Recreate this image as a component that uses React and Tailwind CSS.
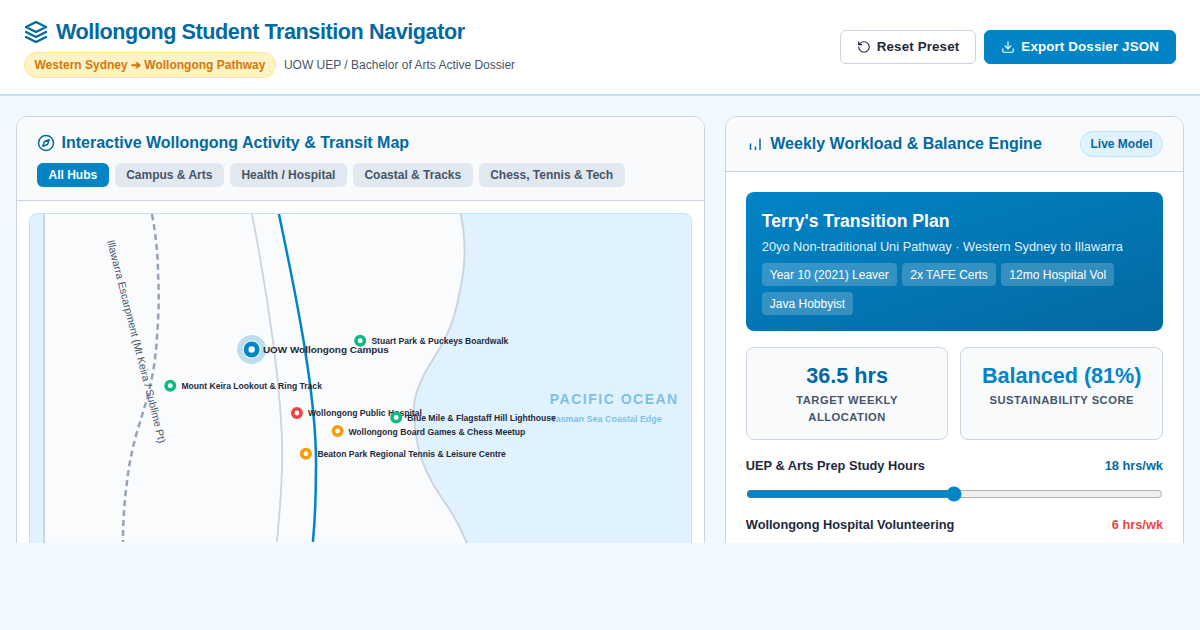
import React from "react";
import { RotateCcw, Download, Compass } from "lucide-react";

const filters = ["All Hubs", "Campus & Arts", "Health / Hospital", "Coastal & Tracks", "Chess, Tennis & Tech"];
const tags = ["Year 10 (2021) Leaver", "2x TAFE Certs", "12mo Hospital Vol", "Java Hobbyist"];
const markers = [
  { x: 170.3, y: 385.7, c: "#10b981", t: "Mount Keira Lookout & Ring Track", lx: 181.5, ly: 389.3, w: 140.5 },
  { x: 360.3, y: 340.7, c: "#10b981", t: "Stuart Park & Puckeys Boardwalk", lx: 371.5, ly: 344, w: 137 },
  { x: 297, y: 413, c: "#ef4444", t: "Wollongong Public Hospital", lx: 308, ly: 416.5, w: 114 },
  { x: 396.3, y: 417.5, c: "#10b981", t: "Blue Mile & Flagstaff Hill Lighthouse", lx: 407.5, ly: 421, w: 148.5 },
  { x: 337.7, y: 431, c: "#f59e0b", t: "Wollongong Board Games & Chess Meetup", lx: 348.5, ly: 434.7, w: 177 },
  { x: 306, y: 453.7, c: "#f59e0b", t: "Beaton Park Regional Tennis & Leisure Centre", lx: 317.5, ly: 457, w: 188.5 },
];

function LayersIcon() {
  return (
    <svg width="24" height="24" viewBox="0 0 24 24" fill="none" stroke="#0369a1" strokeWidth="2.4" strokeLinecap="round" strokeLinejoin="round">
      <polygon points="12 2 2 7 12 12 22 7 12 2" />
      <polyline points="2 17 12 22 22 17" />
      <polyline points="2 12 12 17 22 12" />
    </svg>
  );
}

function BarsIcon() {
  return (
    <svg width="18" height="18" viewBox="0 0 18 18" fill="none" stroke="#0369a1" strokeWidth="1.5">
      <line x1="4.5" y1="15" x2="4.5" y2="8.5" />
      <line x1="9.5" y1="15" x2="9.5" y2="11.5" />
      <line x1="14" y1="15" x2="14" y2="3.5" />
    </svg>
  );
}

function MapArt() {
  return (
    <svg viewBox="30 214 661 440" className="block w-full h-[440px]" style={{ fontFamily: '"Liberation Sans", Arial, sans-serif' }}>
      <path d="M44 210 L460 210 C468 245 466 275 453 320 C445 345 430 362 423 377 C416 392 414 400 414 407 C414 428 417 445 422 460 C429 480 440 495 450 510 C458 522 462 532 467 543 L500 660 L44 660 Z" fill="#fafbfd" stroke="#cbd5e1" strokeWidth="2" />
      <path d="M252 214 C265 280 285 400 282 472 C281 500 279 520 277 542" fill="none" stroke="#cbd5e1" strokeWidth="1.8" />
      <path d="M152 214 C156 235 158 255 158 272 C159 290 159 305 158 322 C157 340 156 355 153 372 C149 395 143 412 137 432 C132 450 129 465 127 482 C124 505 123 525 123 542" fill="none" stroke="#94a3b8" strokeWidth="2.5" strokeDasharray="6 4" />
      <path d="M279 214 C295 290 318 400 316 472 C316 500 315 520 313 542" fill="none" stroke="#0284c7" strokeWidth="2.5" />
      <defs>
        <path id="esc" d="M107 241 C115 272 124 307 132 338 C140 372 150 405 158 441 L162 460" />
      </defs>
      <text fontSize="10.6" fill="#475569">
        <textPath href="#esc">Illawarra Escarpment (Mt Keira / Sublime Pt)</textPath>
      </text>
      <text x="550" y="404" fontSize="14" fontWeight="700" letterSpacing="1.6" fill="#0284c7" opacity="0.45" textLength="129" lengthAdjust="spacing">PACIFIC OCEAN</text>
      <text x="551" y="422" fontSize="9" fontWeight="700" fill="#0284c7" opacity="0.45" textLength="111" lengthAdjust="spacingAndGlyphs">Tasman Sea Coastal Edge</text>
      <circle cx="251.7" cy="349.5" r="14.5" fill="#0284c7" opacity="0.25" />
      <circle cx="251.7" cy="349.5" r="9" fill="#ffffff" />
      <circle cx="251.7" cy="349.5" r="8" fill="#0284c7" />
      <circle cx="251.7" cy="349.5" r="3.2" fill="#ffffff" />
      <text x="263" y="353.3" fontSize="9.5" fontWeight="700" fill="#1e293b" textLength="126" lengthAdjust="spacingAndGlyphs">UOW Wollongong Campus</text>
      {markers.map((m) => (
        <g key={m.t}>
          <circle cx={m.x} cy={m.y} r="6" fill={m.c} />
          <circle cx={m.x} cy={m.y} r="2.4" fill="#ffffff" />
          <text x={m.lx} y={m.ly} fontSize="8.5" fontWeight="700" fill="#1e293b" textLength={m.w} lengthAdjust="spacingAndGlyphs">{m.t}</text>
        </g>
      ))}
    </svg>
  );
}

function SliderHead({ label, value, color }) {
  return (
    <div className="flex justify-between items-center text-[12.8px] font-bold leading-[18px]">
      <span className="text-[#1e293b]">{label}</span>
      <span className={color}>{value}</span>
    </div>
  );
}

export default function App() {
  return (
    <div className="min-h-[630px] bg-[#f0f9ff] text-[#1e293b] [text-rendering:optimizeLegibility]" style={{ fontFamily: '"Liberation Sans", Arial, sans-serif' }}>
      <header className="h-[96px] bg-white border-b-2 border-[#bae6fd] px-6 flex items-center justify-between">
        <div className="flex flex-col gap-[5px]">
          <div className="flex items-center gap-2">
            <LayersIcon />
            <h1 className="text-[21.6px] font-bold text-[#0369a1] tracking-[-0.432px] leading-[31px]">Wollongong Student Transition Navigator</h1>
          </div>
          <div className="flex items-center gap-2">
            <span className="bg-[#fef3c7] border border-[#fde68a] text-[#d97706] rounded-full px-[9.5px] h-[26px] flex items-center text-xs font-bold">Western Sydney ➔ Wollongong Pathway</span>
            <span className="text-xs text-[#475569]">UOW UEP / Bachelor of Arts Active Dossier</span>
          </div>
        </div>
        <div className="flex items-center gap-2">
          <button className="h-[34px] px-4 flex items-center gap-1.5 bg-white border border-[#cbd5e1] rounded-md text-[13.33px] font-bold tracking-[0.15px] text-[#1e293b]">
            <RotateCcw size={14} /> Reset Preset
          </button>
          <button className="h-[34px] px-4 flex items-center gap-1.5 bg-[#0284c7] border border-[#0284c7] rounded-md text-[13.33px] font-bold tracking-[0.15px] text-white">
            <Download size={14} /> Export Dossier JSON
          </button>
        </div>
      </header>

      <main className="h-[447px] overflow-hidden px-4 pt-5 grid grid-cols-[3fr_2fr] gap-5 items-start">
        <section className="bg-white border border-[#cbd5e1] rounded-xl overflow-hidden">
          <div className="bg-[#f8fafc] border-b border-[#cbd5e1] px-5 pt-[15px] pb-[13px]">
            <h2 className="flex items-center gap-[6.5px] text-base font-bold text-[#0369a1] leading-[22px]">
              <Compass size={18} /> Interactive Wollongong Activity & Transit Map
            </h2>
            <div className="flex gap-1.5 mt-[9px]">
              {filters.map((f, i) => (
                <span key={f} className={`h-6 px-[11.5px] flex items-center rounded-md text-xs font-bold ${i === 0 ? "bg-[#0284c7] text-white" : "bg-[#e2e8f0] text-[#475569]"}`}>{f}</span>
              ))}
            </div>
          </div>
          <div className="p-3">
            <div className="border border-[#bae6fd] rounded-lg bg-[#e0f2fe] overflow-hidden">
              <MapArt />
            </div>
          </div>
        </section>

        <section className="bg-white border border-[#cbd5e1] rounded-xl overflow-hidden">
          <div className="h-[55px] bg-[#f8fafc] border-b border-[#cbd5e1] px-5 flex items-center justify-between">
            <h2 className="flex items-center gap-[6.5px] text-base font-bold text-[#0369a1]">
              <BarsIcon /> Weekly Workload & Balance Engine
            </h2>
            <span className="h-[26px] px-[9.5px] rounded-full bg-[#e0f2fe] border border-[#bae6fd] text-[#0369a1] text-xs font-bold flex items-center">Live Model</span>
          </div>
          <div className="p-5">
            <div className="rounded-lg bg-gradient-to-br from-[#0284c7] to-[#0369a1] p-4 text-white h-[139px]">
              <h3 className="text-[17.6px] font-bold leading-6 mt-px">Terry's Transition Plan</h3>
              <p className="text-[12.8px] text-[#e0f2fe] mt-[5px] leading-[18px]">20yo Non-traditional Uni Pathway · Western Sydney to Illawarra</p>
              <div className="flex flex-wrap gap-x-[5.5px] gap-y-1.5 mt-[7px]">
                {tags.map((t) => (
                  <span key={t} className="h-[23px] px-2 rounded-[4px] bg-white/20 text-xs flex items-center">{t}</span>
                ))}
              </div>
            </div>

            <div className="grid grid-cols-2 gap-3 mt-4">
              <div className="h-[93px] bg-[#f8fafc] border border-[#cbd5e1] rounded-lg px-4 pt-[14px] text-center">
                <div className="text-[21.6px] font-bold text-[#0369a1] leading-[28px]">36.5 hrs</div>
                <div className="text-[11.2px] font-bold text-[#475569] tracking-[0.5px] uppercase leading-[17px] mt-[2px]">Target Weekly Allocation</div>
              </div>
              <div className="h-[93px] bg-[#f8fafc] border border-[#cbd5e1] rounded-lg px-4 pt-[14px] text-center">
                <div className="text-[21.6px] font-bold text-[#0284c7] leading-[28px]">Balanced (81%)</div>
                <div className="text-[11.2px] font-bold text-[#475569] tracking-[0.5px] uppercase leading-[17px] mt-[2px]">Sustainability Score</div>
              </div>
            </div>

            <div className="mt-[17px]">
              <SliderHead label="UEP & Arts Prep Study Hours" value="18 hrs/wk" color="text-[#0369a1]" />
              <input type="range" min="0" max="36" defaultValue="18" className="block w-full mt-[11px] accent-[#0284c7]" />
              <div className="mt-[14px]">
                <SliderHead label="Wollongong Hospital Volunteering" value="6 hrs/wk" color="text-[#ef4444]" />
              </div>
            </div>
          </div>
        </section>
      </main>
    </div>
  );
}
